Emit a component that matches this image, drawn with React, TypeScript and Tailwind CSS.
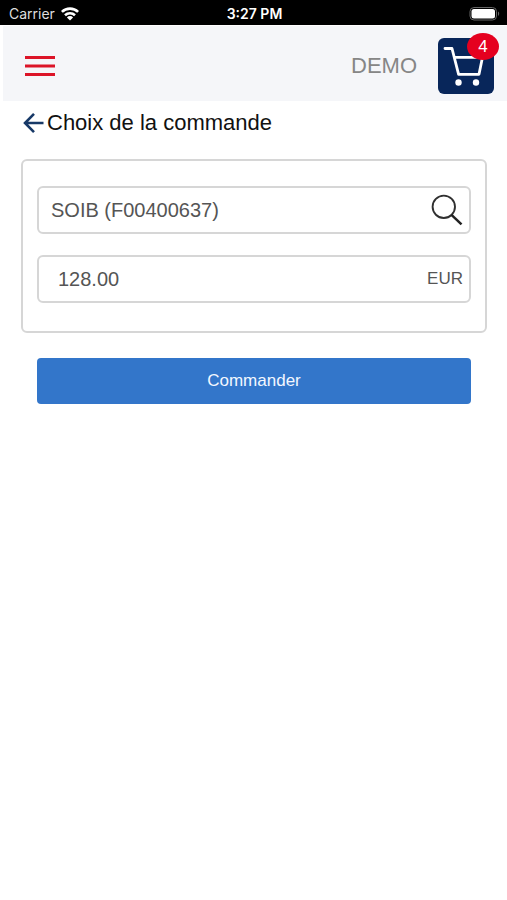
import { useState } from "react";

function WifiIcon() {
  return (
    <svg width="20" height="16" viewBox="0 0 20 16" aria-hidden="true">
      <g fill="none" stroke="#fff" strokeWidth="2.6">
        <path d="M1.9 5.9a11.6 11.6 0 0 1 16.2 0" />
        <path d="M5 9.3a7.2 7.2 0 0 1 10 0" />
      </g>
      <path d="M10 14.4 6.9 11.4a4.4 4.4 0 0 1 6.2 0Z" fill="#fff" />
    </svg>
  );
}

function BatteryIcon() {
  return (
    <svg width="31" height="16" viewBox="0 0 31 16" aria-hidden="true">
      <rect x="1" y="1.5" width="26.5" height="12.5" rx="4" fill="none" stroke="#666" strokeWidth="1" />
      <rect x="2.5" y="3" width="23.5" height="9.5" rx="2.5" fill="#fff" />
      <path d="M29 5.6c1.6.7 1.6 3.6 0 4.3Z" fill="#666" />
    </svg>
  );
}

function StatusBar() {
  return (
    <div className="grid h-[25px] grid-cols-3 items-center bg-black pl-[9px] pr-[7px] pt-[2px] font-[Inter,sans-serif] text-[14px] leading-5 text-white">
      <div className="flex items-center gap-[5px] text-[#dedede]">
        <span>Carrier</span>
        <WifiIcon />
      </div>
      <div className="text-center font-semibold">3:27 PM</div>
      <div className="flex justify-end">
        <BatteryIcon />
      </div>
    </div>
  );
}

function Header() {
  return (
    <header className="ml-[3px] mt-px flex h-[75px] items-center justify-between bg-[#f5f6f9] pl-[22px] pr-[13px] pt-[5px]">
      <button type="button" aria-label="Menu">
        <svg width="30" height="22" viewBox="0 0 30 22" aria-hidden="true">
          <path d="M0 2.5h30M0 11h30M0 19.5h30" stroke="#dc1428" strokeWidth="2.8" />
        </svg>
      </button>
      <div className="flex items-center gap-[21px]">
        <span className="text-[22px] leading-7 text-[#868686]">DEMO</span>
        <button type="button" aria-label="Panier" className="relative rounded-md bg-[#08265a]">
          <svg width="56" height="56" viewBox="0 0 56 56" aria-hidden="true">
            <path
              d="M7 10.5h7l6.6 25.8h20.4l3.5-17H16.3"
              fill="none"
              stroke="#fff"
              strokeWidth="2.8"
              strokeLinecap="round"
              strokeLinejoin="round"
            />
            <circle cx="20.5" cy="44.5" r="3.2" fill="#fff" />
            <circle cx="38" cy="44.5" r="3.2" fill="#fff" />
          </svg>
          <span className="absolute -right-[5px] -top-[5px] flex h-[27px] w-[32px] items-center justify-center rounded-[50%] bg-[#e5001f] text-[17px] leading-5 text-white">
            4
          </span>
        </button>
      </div>
    </header>
  );
}

export default function App() {
  const [order, setOrder] = useState("SOIB (F00400637)");
  const [amount, setAmount] = useState("128.00");

  return (
    <div className="min-h-screen bg-white font-['Liberation_Sans',Arial,sans-serif]">
      <StatusBar />
      <Header />
      <main>
        <div className="flex items-center gap-[3px] pl-[23px] pt-2">
          <button type="button" aria-label="Retour">
            <svg width="21" height="22" viewBox="0 0 21 22" aria-hidden="true">
              <path d="M20.5 11H2M11 1.8 2 11l9 9.2" fill="none" stroke="#173967" strokeWidth="2.6" />
            </svg>
          </button>
          <h1 className="text-[22px] leading-7 text-[#111]">Choix de la commande</h1>
        </div>
        <form onSubmit={(e) => e.preventDefault()} className="pl-[21px] pr-[20px] pt-[22px]">
          <div className="flex flex-col gap-[21px] rounded-md border-2 border-[#d6d6d6] px-[14px] pb-[28px] pt-[25px]">
            <div className="flex h-12 items-center rounded-md border-2 border-[#d6d6d6] pl-[12px] pr-[6px]">
              <input
                aria-label="Commande"
                value={order}
                onChange={(e) => setOrder(e.target.value)}
                className="min-w-0 flex-1 bg-transparent text-[20px] leading-7 text-[#555] outline-none"
              />
              <button type="button" aria-label="Rechercher">
                <svg width="32" height="32" viewBox="0 0 32 32" aria-hidden="true">
                  <circle cx="12.8" cy="12.8" r="11.2" fill="none" stroke="#303030" strokeWidth="1.9" />
                  <path d="m20.5 20.8 10 9.5" stroke="#222" strokeWidth="2.5" />
                </svg>
              </button>
            </div>
            <div className="flex h-12 items-center rounded-md border-2 border-[#d6d6d6] pl-[19px] pr-[6px]">
              <input
                id="amount"
                inputMode="decimal"
                value={amount}
                onChange={(e) => setAmount(e.target.value)}
                className="min-w-0 flex-1 bg-transparent text-[20px] leading-7 text-[#555] outline-none"
              />
              <label htmlFor="amount" className="text-[17px] leading-6 text-[#555]">
                EUR
              </label>
            </div>
          </div>
          <div className="px-[16px] pt-[25px]">
            <button
              type="submit"
              className="h-[46px] w-full rounded bg-[#3376ca] text-[17px] leading-6 text-[#f2f7ff]"
            >
              Commander
            </button>
          </div>
        </form>
      </main>
    </div>
  );
}
